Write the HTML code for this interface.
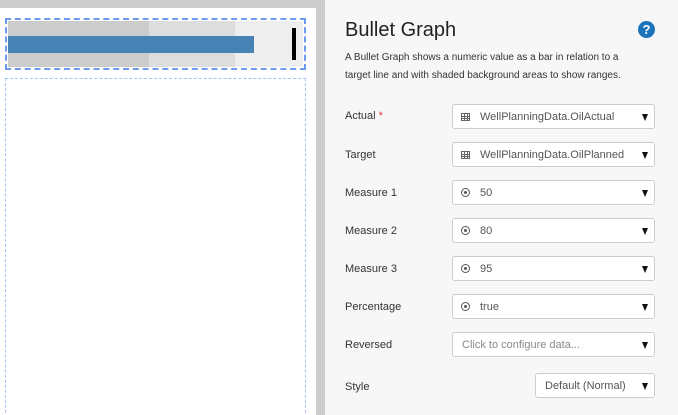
<!DOCTYPE html>
<html style="width:678px;height:415px;overflow:hidden"><head><style>
*{box-sizing:border-box;margin:0;padding:0}
body{width:678px;height:415px;overflow:hidden;background:#ccc;font-family:"Liberation Sans",sans-serif;position:relative}
.abs{position:absolute}
.white{left:0;top:8px;width:316px;height:407px;background:#fff}
.right{left:325px;top:0;width:353px;height:415px;background:#f7f7f7}
.lbl{position:absolute;left:345px;font-size:11px;color:#333}
.dd{position:absolute;left:452px;width:203px;height:25px;background:#fff;border:1px solid #ccc;border-radius:3px;font-size:11px;color:#555;line-height:24px;padding-left:27px}
.dd:after{content:"";position:absolute;right:6px;top:9px;border-left:3.5px solid transparent;border-right:3.5px solid transparent;border-top:7px solid #111}
.tg{position:absolute;left:8px;top:8px;width:9px;height:8px;border:1px solid #666;background:linear-gradient(#666,#666) 0 2px/100% 1px no-repeat,linear-gradient(#666,#666) 2px 0/1px 100% no-repeat,linear-gradient(#666,#666) 5px 0/1px 100% no-repeat,linear-gradient(#666,#666) 0 4px/100% 1px no-repeat}
.ci{position:absolute;left:8px;top:7px;width:9px;height:9px;border:1.5px solid #555;border-radius:50%}
.ci:after{content:"";position:absolute;left:1.5px;top:1.5px;width:3px;height:3px;background:#555;border-radius:50%}
</style></head><body>
<div class="abs white"></div>
<div class="abs" style="left:5px;top:18px;width:301px;height:52px;border:2px dashed #6d9bef"></div>
<div class="abs" style="left:8px;top:21px;width:141px;height:46px;background:#ccc"></div>
<div class="abs" style="left:149px;top:21px;width:86px;height:46px;background:#ddd"></div>
<div class="abs" style="left:235px;top:21px;width:68px;height:46px;background:#eee"></div>
<div class="abs" style="left:8px;top:36px;width:246px;height:17px;background:#4682b4"></div>
<div class="abs" style="left:292px;top:28px;width:4px;height:32px;background:#000"></div>
<div class="abs" style="left:5px;top:78px;width:301px;height:350px;border:1px dashed #a6c2f2"></div>
<div class="abs right"></div>
<div class="abs" style="left:345px;top:19px;font-size:20px;color:#222">Bullet Graph</div>
<div class="abs" style="left:638px;top:21px;width:17px;height:17px;border-radius:50%;background:#1b74bb;color:#fff;font-size:13px;font-weight:bold;text-align:center;line-height:17px">?</div>
<div class="abs" style="left:345px;top:49px;font-size:10px;color:#333;line-height:18px;width:320px">A Bullet Graph shows a numeric value as a bar in relation to a<br>target line and with shaded background areas to show ranges.</div>

<div class="lbl" style="top:110px">Actual <span style="color:#e33">*</span></div>
<div class="dd" style="top:104px"><span class="tg"></span>WellPlanningData.OilActual</div>
<div class="lbl" style="top:149px">Target</div>
<div class="dd" style="top:142px"><span class="tg"></span>WellPlanningData.OilPlanned</div>
<div class="lbl" style="top:187px">Measure 1</div>
<div class="dd" style="top:180px"><span class="ci"></span>50</div>
<div class="lbl" style="top:225px">Measure 2</div>
<div class="dd" style="top:218px"><span class="ci"></span>80</div>
<div class="lbl" style="top:263px">Measure 3</div>
<div class="dd" style="top:256px"><span class="ci"></span>95</div>
<div class="lbl" style="top:301px">Percentage</div>
<div class="dd" style="top:294px"><span class="ci"></span>true</div>
<div class="lbl" style="top:339px">Reversed</div>
<div class="dd" style="top:332px;padding-left:9px;color:#888">Click to configure data...</div>
<div class="lbl" style="top:381px">Style</div>
<div class="dd" style="top:373px;left:535px;width:120px;padding-left:9px">Default (Normal)</div>
</body></html>
